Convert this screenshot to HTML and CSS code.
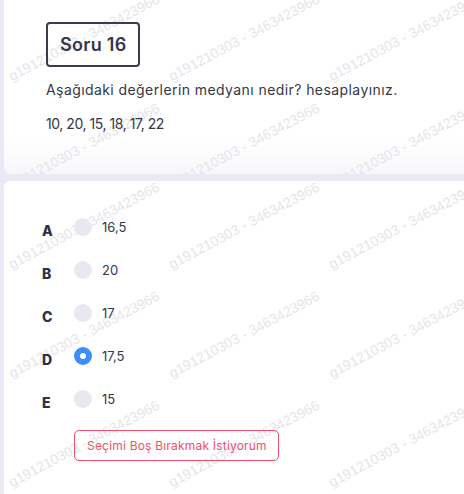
FILE: index.html
```
<!DOCTYPE html>
<html lang="tr">
<head>
<meta charset="utf-8">
<link rel="stylesheet" href="styles.css">
</head>
<body>
<div class="page">
  <section class="card card-question">
    <div class="wm wm-first">
      <span>g191210303 - 3463423966</span><span>g191210303 - 3463423966</span><span>g191210303 - 3463423966</span>
      <span>g191210303 - 3463423966</span><span>g191210303 - 3463423966</span><span>g191210303 - 3463423966</span>
    </div>
    <div class="q-title">Soru 16</div>
    <p class="q-text">Aşağıdaki değerlerin medyanı nedir? hesaplayınız.</p>
    <p class="q-data">10, 20, 15, 18, 17, 22</p>
  </section>
  <section class="card card-answers">
    <div class="wm">
      <span>g191210303 - 3463423966</span><span>g191210303 - 3463423966</span><span>g191210303 - 3463423966</span>
      <span>g191210303 - 3463423966</span><span>g191210303 - 3463423966</span><span>g191210303 - 3463423966</span>
      <span>g191210303 - 3463423966</span><span>g191210303 - 3463423966</span><span>g191210303 - 3463423966</span>
    </div>
    <ul class="options">
      <li class="option"><span class="letter">A</span><span class="radio"></span><span class="label">16,5</span></li>
      <li class="option"><span class="letter">B</span><span class="radio"></span><span class="label">20</span></li>
      <li class="option"><span class="letter">C</span><span class="radio"></span><span class="label">17</span></li>
      <li class="option"><span class="letter">D</span><span class="radio checked"></span><span class="label">17,5</span></li>
      <li class="option"><span class="letter">E</span><span class="radio"></span><span class="label">15</span></li>
    </ul>
    <button class="skip">Seçimi Boş Bırakmak İstiyorum</button>
  </section>
</div>
</body>
</html>
```
FILE: styles.css
```
html, body {
  margin: 0;
  padding: 0;
}
body {
  background: #e9eaf3;
  font-family: "Inter", "Noto Sans", sans-serif;
  color: #34364a;
  width: 464px;
  height: 494px;
  overflow: hidden;
}
.page {
  padding-left: 4px;
  display: flex;
  flex-direction: column;
  gap: 7px;
}
.card {
  position: relative;
  overflow: hidden;
  background: #fff;
  width: 470px;
}
.card-question {
  height: 174px;
  border-radius: 0 0 6px 6px;
  padding: 22px 0 0 42px;
  box-sizing: border-box;
  background: linear-gradient(to bottom, #fff 0, #fff 140px, #f7f7fa 174px);
}
.card-answers {
  height: 320px;
  border-radius: 6px 0 0 0;
  padding: 37px 0 0 38px;
  box-sizing: border-box;
}
.wm {
  position: absolute;
  left: 9px;
  top: -19px;
  display: grid;
  grid-template-columns: repeat(3, 160px);
  grid-auto-rows: 109px;
  pointer-events: none;
  z-index: 0;
}
.wm-first {
  top: -26px;
}
.wm span {
  align-self: end;
  font-family: "Liberation Sans", Arial, sans-serif;
  font-size: 14px;
  line-height: 14px;
  color: #e5e5ea;
  white-space: nowrap;
  transform-origin: 0 100%;
  transform: rotate(-28deg);
}
.q-title, .q-text, .q-data, .options, .skip {
  position: relative;
  z-index: 1;
}
.q-title {
  display: inline-block;
  border: 2px solid #3a3b4d;
  border-radius: 4px;
  padding: 0 11px 0 12px;
  height: 45px;
  box-sizing: border-box;
  line-height: 41px;
  font-size: 18px;
  font-weight: 600;
  color: #34364a;
  letter-spacing: 0.3px;
}
.q-text {
  margin: 13px 0 0;
  font-size: 14px;
  line-height: 20px;
  letter-spacing: 0.42px;
  color: #34364a;
}
.q-data {
  margin: 14px 0 0;
  font-size: 14px;
  line-height: 20px;
  letter-spacing: -0.45px;
  color: #34364a;
}
.options {
  list-style: none;
  margin: 0;
  padding: 0;
  display: flex;
  flex-direction: column;
  gap: 25px;
}
.option {
  display: flex;
  align-items: center;
  height: 18px;
}
.letter {
  width: 32px;
  font-size: 14px;
  font-weight: 800;
  color: #2e3046;
  position: relative;
  top: 3px;
}
.radio {
  width: 18px;
  height: 18px;
  border-radius: 50%;
  background: #e8e9f0;
  box-sizing: border-box;
  flex: none;
}
.radio.checked {
  background: #fff;
  border: 6px solid #3b8ef7;
}
.label {
  margin-left: 10px;
  font-size: 13px;
  color: #34364a;
}
.skip {
  margin: 22px 0 0 32px;
  display: block;
  height: 31px;
  padding: 0 11px 0 12px;
  border: 1px solid #f0506a;
  border-radius: 5px;
  background: transparent;
  color: #f0506a;
  font-family: "Inter", "Noto Sans", sans-serif;
  font-size: 12px;
  letter-spacing: 0.2px;
}
```
